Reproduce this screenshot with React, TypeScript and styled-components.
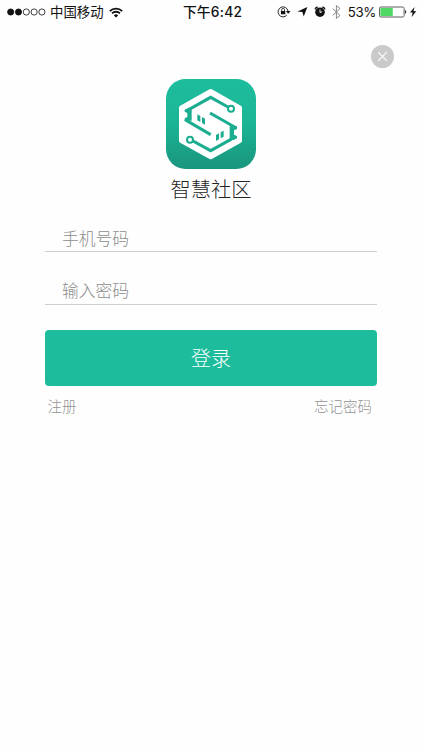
import React from "react";
import styled, { createGlobalStyle } from "styled-components";

const GlobalStyle = createGlobalStyle`
  * { box-sizing: border-box; }
  body { margin: 0; background: #fff; }
  button, input { font-family: inherit; }
`;

const Screen = styled.div`
  width: 100%;
  height: 750px;
  display: flex;
  flex-direction: column;
  background: #fefefe;
  overflow: hidden;
  font-family: "Noto Sans CJK SC", sans-serif;
`;

const StatusBar = styled.header`
  height: 24px;
  flex: none;
  display: grid;
  grid-template-columns: 1fr auto 1fr;
  align-items: center;
  padding: 0 4px 0 7px;
  color: #111;
  font-size: 13.4px;
  line-height: 22px;
`;

const StatusGroup = styled.div<{ $end?: boolean }>`
  display: flex;
  align-items: center;
  justify-content: ${(p) => (p.$end ? "flex-end" : "flex-start")};
  svg { display: block; flex: none; }
`;

const Carrier = styled.span`
  margin: 0 5px 0 4px;
  padding-bottom: 2px;
`;

const Clock = styled.div`
  font-family: Inter, "Noto Sans CJK SC", sans-serif;
  font-weight: 500;
  font-size: 13.8px;
  letter-spacing: 0.2px;
  white-space: nowrap;
`;

const Percent = styled.span`
  font-family: Inter, sans-serif;
  font-size: 13.3px;
  letter-spacing: -0.35px;
  margin: 0 3px 0 6px;
`;

const CloseRow = styled.div`
  display: flex;
  justify-content: flex-end;
  padding: 21px 28px 0 0;
`;

const CloseButton = styled.button`
  width: 23px;
  height: 23px;
  padding: 0;
  border: 0;
  border-radius: 50%;
  background: #cacaca;
  display: grid;
  place-items: center;
`;

const Brand = styled.div`
  display: flex;
  flex-direction: column;
  align-items: center;
  margin-top: 11px;
  svg { display: block; }
`;

const AppName = styled.h1`
  margin: 3px 0 0;
  height: 32px;
  line-height: 32px;
  font-size: 20.3px;
  font-weight: 300;
  color: #222;
`;

const Form = styled.form`
  display: flex;
  flex-direction: column;
  margin: 12px 45px 0;
`;

const Field = styled.input<{ $height: number; $top: number }>`
  width: 100%;
  height: ${(p) => p.$height}px;
  padding: ${(p) => p.$top}px 17px 0;
  border: 0;
  border-bottom: 1px solid #cfcfcf;
  border-radius: 0;
  background: transparent;
  outline: none;
  font-size: 16.8px;
  font-weight: 300;
  color: #333;
  &::placeholder { color: #8d8d8d; opacity: 1; }
`;

const LoginButton = styled.button`
  height: 56px;
  margin-top: 25px;
  padding: 0 0 2px;
  border: 0;
  border-radius: 4px;
  background: #1dbc9c;
  color: #fff;
  font-size: 20px;
  font-weight: 300;
`;

const Links = styled.nav`
  display: flex;
  justify-content: space-between;
  padding: 9px 5px 0 2.5px;
`;

const TextLink = styled.a`
  color: #939393;
  font-size: 14.5px;
  font-weight: 300;
  line-height: 22px;
`;

const SignalDots = () => (
  <svg width="39" height="8" viewBox="0 0 39 8" stroke="#111" strokeWidth="0.8">
    {[0, 1, 2, 3, 4].map((i) => (
      <circle key={i} cx={3.7 + i * 7.8} cy="4" r="3.1" fill={i < 2 ? "#111" : "none"} />
    ))}
  </svg>
);

const Wifi = () => (
  <svg width="14" height="11" viewBox="0 0 14 11" fill="none" stroke="#111" strokeWidth="1.8">
    <path d="M0.8 4.1a8.8 8.8 0 0 1 12.4 0M3 6.4a5.7 5.7 0 0 1 8 0" />
    <path d="M7 10.6 4.8 8.4a3.1 3.1 0 0 1 4.4 0Z" fill="#111" stroke="none" />
  </svg>
);

const StatusIcons = () => (
  <svg width="66" height="16" viewBox="276 4 66 16" fill="none" stroke="#111">
    <path d="M286.8 15.2A5 5 0 1 1 288 11" strokeWidth="0.9" />
    <path d="M285.9 11h4.6l-2.3 2.8Z" fill="#111" stroke="none" />
    <path d="M280.9 11h4.4v3.3h-4.4Z" fill="#111" stroke="none" />
    <path d="M281.7 11V9.8a1.4 1.4 0 0 1 2.8 0V11" strokeWidth="0.8" />
    <path d="m307.4 7-3.7 9.5-1.3-4.5-4.9-.4Z" fill="#111" stroke="none" />
    <circle cx="320" cy="12.2" r="4.8" fill="#111" stroke="none" />
    <path d="M315.1 9.3a3 3 0 0 1 2.5-2.4M322.4 6.9a3 3 0 0 1 2.5 2.4" strokeWidth="1.5" />
    <path d="M320 9.4v3.2l2.2-1" stroke="#fff" strokeWidth="0.9" />
    <path d="m332.7 8.6 7.3 6.8-3.6 3V5.6l3.6 3-7.3 6.8" stroke="#888" strokeWidth="1" />
  </svg>
);

const Battery = () => (
  <svg width="39" height="14" viewBox="0 0 39 14">
    <rect x="0.5" y="2" width="24.6" height="10" rx="1.5" fill="#fff" stroke="#333" strokeWidth="0.8" />
    <rect x="1.4" y="2.9" width="12.4" height="8.2" rx="0.6" fill="#4fd964" />
    <path d="M26 5.1c1.6.3 1.6 3.5 0 3.8Z" fill="#333" />
    <path d="M35.6 2 31 7.5h2.7L32.6 12l4.7-5.8h-2.8Z" fill="#111" />
  </svg>
);

const Logo = () => (
  <svg width="90" height="90" viewBox="18 20 270 270">
    <defs>
      <linearGradient id="logo-fill" x1="0" y1="0" x2="0" y2="1">
        <stop offset="0" stopColor="#1dbd9d" />
        <stop offset="0.45" stopColor="#1cb697" />
        <stop offset="1" stopColor="#19957d" />
      </linearGradient>
    </defs>
    <rect x="18" y="20" width="270" height="270" rx="59" fill="url(#logo-fill)" />
    <path
      d="M152 57 239 106V205L152 254 64 205V106Z"
      fill="#fff"
      stroke="#fff"
      strokeWidth="14"
      strokeLinejoin="round"
    />
    <g fill="none" stroke="#1bad90" strokeWidth="9">
      <path d="M204 104 152 75 86 112" />
      <path d="M75 142 152 187" />
      <path d="M99 206 152 235 218 198" />
      <path d="M229 167 150 122" />
      <circle cx="213" cy="109" r="9" strokeWidth="6" />
      <circle cx="90" cy="202" r="9" strokeWidth="6" />
    </g>
    <g fill="#1bad90">
      <path d="M74 112 84 107H95V145H74V138L82 134V122L74 118Z" />
      <path d="M231 198 221 203H209V162H231V170L222 174V187L231 191Z" />
      <path d="m112 126 9 5v18l-9-5ZM126 134l9 5v18l-9-5ZM168 188l9-5v18l-9 5ZM182 180l9-5v18l-9 5Z" />
    </g>
  </svg>
);

export default function App() {
  return (
    <Screen>
      <GlobalStyle />
      <StatusBar>
        <StatusGroup>
          <SignalDots />
          <Carrier>中国移动</Carrier>
          <Wifi />
        </StatusGroup>
        <Clock>下午6:42</Clock>
        <StatusGroup $end>
          <StatusIcons />
          <Percent>53%</Percent>
          <Battery />
        </StatusGroup>
      </StatusBar>
      <CloseRow>
        <CloseButton aria-label="关闭">
          <svg width="11" height="11" viewBox="0 0 11 11" stroke="#fff" strokeWidth="1.1">
            <path d="m1.2 1.2 8.6 8.6m0-8.6-8.6 8.6" />
          </svg>
        </CloseButton>
      </CloseRow>
      <Brand>
        <Logo />
        <AppName>智慧社区</AppName>
      </Brand>
      <Form onSubmit={(e) => e.preventDefault()}>
        <Field $height={36} $top={8} type="tel" placeholder="手机号码" />
        <Field $height={53} $top={23} type="password" placeholder="输入密码" />
        <LoginButton type="submit">登录</LoginButton>
        <Links>
          <TextLink>注册</TextLink>
          <TextLink>忘记密码</TextLink>
        </Links>
      </Form>
    </Screen>
  );
}
